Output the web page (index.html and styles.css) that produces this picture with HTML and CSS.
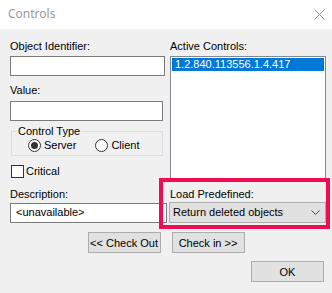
FILE: index.html
```html
<!DOCTYPE html>
<html lang="en">
<head>
  <meta charset="UTF-8">
  <title>Controls</title>
  <link rel="stylesheet" href="styles.css">
</head>
<body>

<div class="dialog">
  <div class="titlebar">
    <span class="title">Controls</span>
    <svg class="close" width="11" height="11" viewBox="0 0 11 11">
      <path d="M0.5 0.5 L10.5 10.5 M10.5 0.5 L0.5 10.5" stroke="#8f8f8f" stroke-width="1" fill="none"/>
    </svg>
  </div>

  <div class="content">
    <div class="columns">
      <div class="col-left">
        <div class="label">Object Identifier:</div>
        <div class="textbox w155"></div>

        <div class="label value-label">Value:</div>
        <div class="textbox w153 value-box"></div>

        <fieldset class="group">
          <legend>Control Type</legend>
          <div class="radios">
            <span class="radio checked"></span><span class="radio-text">Server</span>
            <span class="radio client"></span><span class="radio-text">Client</span>
          </div>
        </fieldset>

        <div class="check-row">
          <span class="checkbox"></span><span>Critical</span>
        </div>

        <div class="label desc-label">Description:</div>
        <div class="textbox w157 desc-box">&lt;unavailable&gt;</div>
      </div>

      <div class="col-right">
        <div class="label">Active Controls:</div>
        <div class="listbox">
          <div class="list-item selected">1.2.840.113556.1.4.417</div>
        </div>

        <div class="label predef-label">Load Predefined:</div>
        <div class="combo">
          <span>Return deleted objects</span>
          <svg width="9" height="5" viewBox="0 0 9 5">
            <polyline points="0.5,0.5 4.5,4.5 8.5,0.5" stroke="#444" stroke-width="1" fill="none"/>
          </svg>
        </div>
      </div>
    </div>

    <div class="check-buttons">
      <button class="btn">&lt;&lt; Check Out</button>
      <button class="btn">Check in &gt;&gt;</button>
    </div>

    <div class="ok-row">
      <button class="btn">OK</button>
    </div>
  </div>

  <div class="highlight"></div>
</div>

</body>
</html>
```

FILE: styles.css
```css
body {
  margin: 0;
  background: #f0f0f0;
  font-family: "Liberation Sans", Arial, sans-serif;
  font-size: 11px;
  line-height: 13px;
  color: #000;
}

.dialog {
  position: relative;
  width: 332px;
  height: 293px;
  overflow: hidden;
  background: #f0f0f0;
}

.titlebar {
  height: 29px;
  background: #fff;
  display: flex;
  align-items: center;
  justify-content: space-between;
  padding: 0 7px 3px 8px;
  box-sizing: border-box;
}

.title {
  font-family: "Noto Sans", sans-serif;
  font-size: 12px;
  color: #999;
}

.close {
  margin-top: 2px;
}

.content {
  padding: 0 6px 0 10px;
}

.columns {
  display: flex;
  gap: 3px;
}

.col-left {
  width: 157px;
  display: flex;
  flex-direction: column;
  align-items: flex-start;
}

.col-right {
  width: 156px;
  display: flex;
  flex-direction: column;
}

.label {
  margin-top: 11px;
  height: 13px;
  white-space: nowrap;
}

.textbox {
  margin-top: 3px;
  height: 20px;
  box-sizing: border-box;
  border: 1px solid #7a7a7a;
  background: #fff;
  padding: 2px 5px;
  white-space: nowrap;
}

.w155 { width: 155px; }
.w153 { width: 153px; }
.w157 { width: 157px; }

.value-label { margin-top: 8px; }
.value-box { margin-top: 4px; }

.group {
  margin: 4px 0 0 1px;
  width: 152px;
  box-sizing: border-box;
  border: 1px solid #dcdcdc;
  padding: 0 0 3px 5px;
}

.group legend {
  padding: 0 1px;
  line-height: 13px;
}

.radios {
  display: flex;
  align-items: center;
  height: 13px;
  margin-top: 1px;
  padding-left: 11px;
}

.radio {
  width: 13px;
  height: 13px;
  box-sizing: border-box;
  border: 1px solid #333;
  border-radius: 50%;
  background: #fff;
  display: flex;
  align-items: center;
  justify-content: center;
}

.radio.checked::after {
  content: "";
  width: 7px;
  height: 7px;
  border-radius: 50%;
  background: #333;
}

.radio-text {
  margin-left: 3px;
}

.radio.client {
  margin-left: 19px;
}

.check-row {
  margin: 9px 0 0 1px;
  display: flex;
  align-items: center;
  height: 13px;
}

.checkbox {
  width: 13px;
  height: 13px;
  box-sizing: border-box;
  border: 1px solid #333;
  background: #fff;
  margin-right: 2px;
}

.desc-label { margin-top: 10px; }
.desc-box { margin-top: 2px; }

.listbox {
  margin-top: 3px;
  height: 124px;
  box-sizing: border-box;
  border: 1px solid #828790;
  background: #fff;
  padding: 1px;
}

.list-item {
  height: 13px;
  padding-left: 3px;
  white-space: nowrap;
}

.list-item.selected {
  background: #0078d7;
  color: #fff;
}

.predef-label { margin-top: 8px; }

.combo {
  margin: 1px 0 0 -1px;
  width: 157px;
  height: 21px;
  box-sizing: border-box;
  border: 1px solid #adadad;
  background: #e1e1e1;
  display: flex;
  align-items: center;
  justify-content: space-between;
  padding: 0 5px 0 3px;
}

.check-buttons {
  margin: 9px 0 0 -4px;
  display: flex;
  justify-content: center;
  gap: 11px;
}

.btn {
  width: 73px;
  height: 21px;
  box-sizing: border-box;
  border: 1px solid #adadad;
  background: #e1e1e1;
  font-family: "Liberation Sans", Arial, sans-serif;
  font-size: 11px;
  color: #000;
  padding: 0;
}

.ok-row {
  margin-top: 8px;
  display: flex;
  justify-content: flex-end;
  padding-right: 2px;
}

.highlight {
  position: absolute;
  left: 159px;
  top: 178px;
  width: 171px;
  height: 51px;
  box-sizing: border-box;
  border: 4px solid #f20a52;
}
```
